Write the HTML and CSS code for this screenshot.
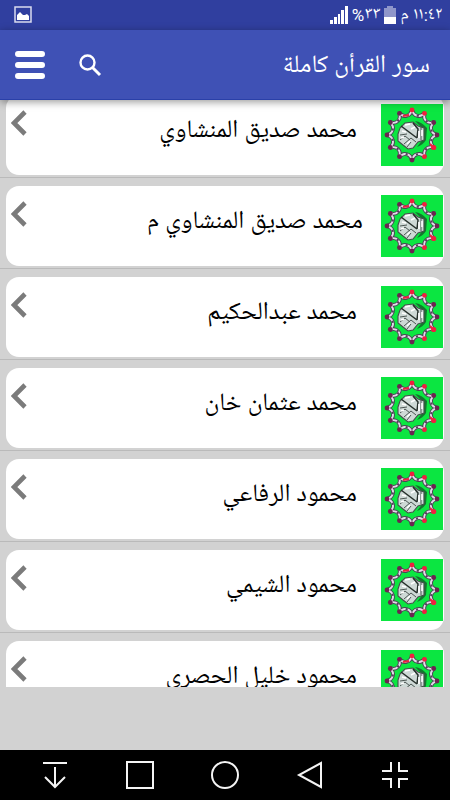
FILE: index.html
```html
<!DOCTYPE html>
<html lang="ar" dir="rtl">
<head>
<meta charset="utf-8">
<meta name="viewport" content="width=device-width, initial-scale=1">
<title>سور القرأن كاملة</title>
<link rel="stylesheet" href="styles.css">
</head>
<body>
<svg class="defs" aria-hidden="true">
  <defs>
    <symbol id="chevron" viewBox="0 0 16 26"><path d="M14 2 3 13l11 11" fill="none" stroke="#7b7b7b" stroke-width="4.6"/></symbol>
    <g id="spike">
      <path d="M-5.200-19.300Q-1-20 0-26 1-20 5.200-19.300" fill="none" stroke="#4a4354" stroke-width="3.800"/>
      <path d="M-5.200-19.300Q-1-20 0-26 1-20 5.200-19.300" fill="none" stroke="#e3dbe9" stroke-width="1.900"/>
    </g>
    <symbol id="emblem" viewBox="0 0 62 62">
      <rect width="62" height="62" fill="#0be641"/>
      <g transform="translate(31 31)">
        <use href="#spike"/><use href="#spike" transform="rotate(30)"/><use href="#spike" transform="rotate(60)"/><use href="#spike" transform="rotate(90)"/><use href="#spike" transform="rotate(120)"/><use href="#spike" transform="rotate(150)"/><use href="#spike" transform="rotate(180)"/><use href="#spike" transform="rotate(210)"/><use href="#spike" transform="rotate(240)"/><use href="#spike" transform="rotate(270)"/><use href="#spike" transform="rotate(300)"/><use href="#spike" transform="rotate(330)"/>
        <circle r="20" fill="none" stroke="#55405c" stroke-width="2" stroke-dasharray="2 8.472" stroke-dashoffset="-4.236"/>
        <g fill="#6b2450"><circle cx="-12.500" cy="-21.700" r="2.400"/><circle cx="-21.700" cy="-12.500" r="2.400"/><circle cx="-25" cy="0" r="2.400"/><circle cx="-21.700" cy="12.500" r="2.400"/><circle cx="-12.500" cy="21.700" r="2.400"/><circle cx="0" cy="25" r="2.400"/><circle cx="25" cy="0" r="2.400"/><circle cx="21.700" cy="-12.500" r="2.400"/></g>
        <g fill="#f0203f"><circle cx="0" cy="-25" r="2.400"/><circle cx="12.500" cy="-21.700" r="2.400"/><circle cx="21.700" cy="12.500" r="2.600"/><circle cx="12.500" cy="21.700" r="2.400"/></g>
        <path d="M-9-19-3-20M18 9l4 4" stroke="#f0203f" stroke-width="2"/>
        <path d="M3-14Q10-13 15-7L14 5Q11 10 5 12L11 4 11-6Z" fill="#14762f"/>
        <path d="M-14-1-12-7-7-12 1-13 6-9 12-7 12 5 6 7 1 13-4 14-9 10-14 6Z" fill="#ced9d6" stroke="#46504c" stroke-width="1.100"/>
        <path d="M-11-9-3-3 5 3M1-12 6-6 5 3" fill="none" stroke="#26302b" stroke-width="1.500"/>
        <path d="M9-8v13M-12 0l7-1M-12 5l5-4 5 4M-8 9l7-6 5 4M-5 12l4-5" fill="none" stroke="#4d5754" stroke-width="1"/>
        <path d="M-7-10-2-11M-10-4l4 1M-11 3l3-1M-5 9l3-3M3-8-1-6M10-5v6M7-4v7" fill="none" stroke="#fff" stroke-width="1.600"/>
      </g>
    </symbol>
  </defs>
</svg>
<div class="app">
  <div class="status">
    <span>١١:٤٢ م</span>
    <svg width="12" height="18" viewBox="0 0 12 18" aria-hidden="true"><path d="M3 0h6v2h3v9H0V2h3z" fill="#8f96ca"/><path d="M0 11h12v7H0z" fill="#fff"/></svg>
    <span>٣٣%</span>
    <svg width="18" height="18" viewBox="0 0 18 18" aria-hidden="true"><path d="M0 14h3v4H0zM4 11h3v7H4zM8 8h2v10H8zM11 4h3v14h-3zM15 0h3v18h-3z" fill="#fff"/></svg>
    <svg class="shot" width="18" height="18" viewBox="0 0 18 18" aria-hidden="true"><path d="M1 1h16v15H1z" fill="none" stroke="#d9dcf0" stroke-width="1.500"/><path d="M3 14V9l3-3 3 3h2l2-1 2 2v4z" fill="#fff"/></svg>
  </div>
  <header class="bar">
    <h1>سور القرأن كاملة</h1>
    <button type="button" aria-label="بحث"><svg width="24" height="24" viewBox="0 0 24 24"><circle cx="9.500" cy="9.500" r="7" fill="none" stroke="#fff" stroke-width="2.400"/><path d="m14 14 8 8" stroke="#fff" stroke-width="3"/></svg></button>
    <button type="button" aria-label="القائمة"><svg width="30" height="30" viewBox="0 0 30 30"><path d="M3 4h24M3 15h24M3 26h24" stroke="#fff" stroke-width="6" stroke-linecap="round"/></svg></button>
  </header>
  <main class="content">
    <ul class="list">
      <li><a class="card" href="#"><svg class="emblem"><use href="#emblem"/></svg><span class="name">محمد صديق المنشاوي</span><svg class="chevron"><use href="#chevron"/></svg></a></li>
      <li><a class="card" href="#"><svg class="emblem"><use href="#emblem"/></svg><span class="name name-long">محمد صديق المنشاوي م</span><svg class="chevron"><use href="#chevron"/></svg></a></li>
      <li><a class="card" href="#"><svg class="emblem"><use href="#emblem"/></svg><span class="name">محمد عبدالحكيم</span><svg class="chevron"><use href="#chevron"/></svg></a></li>
      <li><a class="card" href="#"><svg class="emblem"><use href="#emblem"/></svg><span class="name">محمد عثمان خان</span><svg class="chevron"><use href="#chevron"/></svg></a></li>
      <li><a class="card" href="#"><svg class="emblem"><use href="#emblem"/></svg><span class="name">محمود الرفاعي</span><svg class="chevron"><use href="#chevron"/></svg></a></li>
      <li><a class="card" href="#"><svg class="emblem"><use href="#emblem"/></svg><span class="name">محمود الشيمي</span><svg class="chevron"><use href="#chevron"/></svg></a></li>
      <li><a class="card" href="#"><svg class="emblem"><use href="#emblem"/></svg><span class="name">محمود خليل الحصرى</span><svg class="chevron"><use href="#chevron"/></svg></a></li>
    </ul>
  </main>
  <nav class="nav" dir="ltr">
    <button type="button" aria-label="إخفاء الشريط"><svg width="28" height="28" viewBox="0 0 28 28"><path d="M2 2h24M14 6v20M4 16l10 10 10-10"/></svg></button>
    <button type="button" aria-label="التطبيقات الأخيرة"><svg width="28" height="28" viewBox="0 0 28 28"><path d="M1 1h26v26H1z"/></svg></button>
    <button type="button" aria-label="الرئيسية"><svg width="28" height="28" viewBox="0 0 28 28"><circle cx="14" cy="14" r="13"/></svg></button>
    <button type="button" aria-label="رجوع"><svg width="28" height="28" viewBox="0 0 28 28"><path d="M25 2v24L3 14z"/></svg></button>
    <button type="button" aria-label="تصغير"><svg width="28" height="28" viewBox="0 0 28 28"><path d="M10 1v9H1M18 1v9h9M10 27v-9H1M18 27v-9h9"/></svg></button>
  </nav>
</div>
</body>
</html>
```
FILE: styles.css
```css
* { box-sizing: border-box; }
body {
  margin: 0;
  background: #d2d2d2;
  font-family: Roboto, "Noto Naskh Arabic UI", "Noto Naskh Arabic", "DejaVu Sans", sans-serif;
}
svg { display: block; flex: none; }
button { display: block; padding: 0; border: 0; background: none; cursor: pointer; }
.defs { position: absolute; width: 0; height: 0; }
.app { display: flex; flex-direction: column; height: 100vh; }
.status {
  display: flex;
  align-items: center;
  gap: 4px;
  height: 30px;
  flex: none;
  padding: 0 8px 0 14px;
  background: #303f9f;
  color: #fff;
  font-size: 17px;
  line-height: 30px;
}
.shot { margin-right: auto; }
.bar {
  display: flex;
  align-items: center;
  height: 70px;
  flex: none;
  padding: 0 20px 0 15px;
  border-bottom: 1px solid #2a40a8;
  background: #3f51b5;
  box-shadow: 0 2px 8px rgba(0, 0, 0, 0.4);
  color: #fff;
  z-index: 1;
}
.bar h1 { flex: 1; margin: 0; padding-top: 4px; font-size: 25px; line-height: 36px; font-weight: 400; }
.bar button + button { margin-right: 33px; }
.content { flex: 1; min-height: 0; overflow: hidden; margin-bottom: 63px; }
.list { margin: -13px 0 0; padding: 0; list-style: none; }
.list li { padding: 8px 6px 2px; border-bottom: 1px solid #bababa; }
.card {
  display: flex;
  align-items: flex-start;
  height: 80px;
  padding: 9px 1px 0 5px;
  border-radius: 13px;
  background: #fff;
  color: #000;
  text-decoration: none;
}
.emblem { width: 62px; height: 62px; }
.name { flex: 1; padding-right: 24px; font-size: 25px; line-height: 56px; white-space: nowrap; }
.name-long { padding-right: 18px; }
.chevron { width: 16px; height: 26px; margin-top: 6px; }
.nav { display: flex; height: 50px; flex: none; padding: 0 12px; background: #000; }
.nav button { display: flex; flex: 1; align-items: center; justify-content: center; }
.nav svg { fill: none; stroke: #f4f4f4; stroke-width: 2; }
```
